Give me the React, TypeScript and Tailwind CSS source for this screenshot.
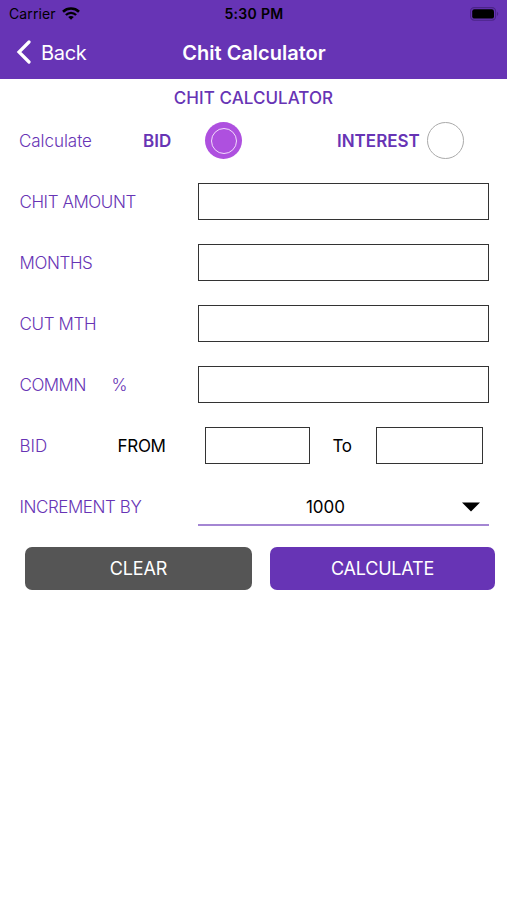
import type { ReactNode } from "react";

function StatusBar() {
  return (
    <div className="grid h-[27px] grid-cols-3 items-center pl-[9px] pr-[8px] text-[14px] leading-none text-black">
      <div className="flex items-center gap-[6px]">
        <span className="tracking-[0.1px]">Carrier</span>
        <svg width="18" height="13" viewBox="0 0 18 13" fill="none" stroke="black">
          <path d="M1 4.7C5.5 0.5 12.5 0.5 17 4.7" strokeWidth="2.6" />
          <path d="M3.9 8C6.8 5.1 11.2 5.1 14.1 8" strokeWidth="2.4" />
          <path d="M9 12.8L6.2 10C7.8 8.6 10.2 8.6 11.8 10Z" fill="black" stroke="none" />
        </svg>
      </div>
      <span className="text-center font-semibold tracking-[0.3px]">5:30 PM</span>
      <div className="flex justify-end">
        <svg width="29" height="14" viewBox="0 0 29 14">
          <rect x="0.6" y="0.6" width="25" height="12.6" rx="3.6" fill="none" stroke="#4b2488" strokeWidth="1.1" />
          <rect x="2.2" y="2.2" width="21.8" height="9.4" rx="2.2" fill="black" />
          <path d="M27 4.8C28.7 5.6 28.7 8.2 27 9Z" fill="#4b2488" />
        </svg>
      </div>
    </div>
  );
}

function Row({ label, children }: { label: ReactNode; children: ReactNode }) {
  return (
    <div className="flex h-[61px] items-center pl-[19.5px]">
      <div className="w-[178.5px] shrink-0 text-[#6734b5]">{label}</div>
      {children}
    </div>
  );
}

function Field({ label }: { label: ReactNode }) {
  return (
    <Row label={label}>
      <input className="h-[37px] w-[291px] border-[1.5px] border-[#333] bg-white px-2 outline-none" />
    </Row>
  );
}

export default function App() {
  return (
    <div className="h-[900px] w-[507px] overflow-hidden whitespace-nowrap bg-white font-['Inter','Liberation_Sans',sans-serif] text-[17px] leading-[22px]">
      <header className="h-[79px] bg-[#6734b5]">
        <StatusBar />
        <div className="grid h-[50px] grid-cols-[150px_208px_149px] items-center text-white">
          <button className="flex items-center gap-[9px] pl-[16px] text-[20px]">
            <svg width="16" height="24" viewBox="0 0 16 24" fill="none" stroke="white" strokeWidth="3.2" strokeLinecap="round">
              <path d="M13 2L3 12L13 22" />
            </svg>
            <span className="pt-px font-normal tracking-[-0.3px]">Back</span>
          </button>
          <h1 className="pt-px text-center text-[20px] font-semibold">Chit Calculator</h1>
        </div>
      </header>
      <main>
        <h2 className="flex h-[31px] items-center justify-center pt-[7px] font-medium tracking-[0.05px] text-[#6734b5]">CHIT CALCULATOR</h2>
        <div className="flex h-[61px] items-center pl-[19px] text-[#6734b5]">
          <span className="w-[124px] font-light tracking-[-0.05px]">Calculate</span>
          <span className="w-[62px] font-semibold tracking-[0.1px]">BID</span>
          <span className="flex size-[37px] items-center justify-center rounded-full bg-[#ae50df]">
            <span className="size-[26px] rounded-full border-[1.5px] border-[#f3dcfb]" />
          </span>
          <span className="ml-[95px] w-[90px] font-semibold">INTEREST</span>
          <span className="size-[37px] rounded-full border border-[#aaa]" />
        </div>
        <Field label={<span className="font-light tracking-[-0.42px]">CHIT AMOUNT</span>} />
        <Field label={<span className="font-light tracking-[-0.38px]">MONTHS</span>} />
        <Field label={<span className="font-light tracking-[-0.35px]">CUT MTH</span>} />
        <Field
          label={
            <span className="flex font-light">
              <span className="w-[92px] tracking-[-0.5px]">COMMN</span>
              <span>%</span>
            </span>
          }
        />
        <Row
          label={
            <span className="flex font-light">
              <span className="w-[98px]">BID</span>
              <span className="font-normal tracking-[-0.3px] text-black">FROM</span>
            </span>
          }
        >
          <input className="ml-[7px] h-[37px] w-[105px] border-[1.5px] border-[#333] bg-white px-2 outline-none" />
          <span className="w-[66px] pr-[2px] text-center tracking-[-0.4px] text-black">To</span>
          <input className="h-[37px] w-[107px] border-[1.5px] border-[#333] bg-white px-2 outline-none" />
        </Row>
        <Row label={<span className="font-light tracking-[-0.43px]">INCREMENT BY</span>}>
          <div className="mt-px flex h-[38px] w-[291px] items-center border-b-2 border-[#a486d3] pr-[9px] text-black">
            <span className="flex-1 pr-[9px] pt-[2px] text-center">1000</span>
            <svg className="mt-px" width="18" height="10" viewBox="0 0 18 10">
              <path d="M0 0.5H18L9 9.5Z" fill="black" />
            </svg>
          </div>
        </Row>
        <div className="flex gap-[18px] pl-[25px] pt-[10px] text-[18px] text-white">
          <button className="h-[43px] w-[227px] rounded-[7px] bg-[#555] pt-px tracking-[-0.15px]">CLEAR</button>
          <button className="h-[43px] w-[225px] rounded-[7px] bg-[#6734b5] pt-px tracking-[-0.2px]">CALCULATE</button>
        </div>
      </main>
    </div>
  );
}
